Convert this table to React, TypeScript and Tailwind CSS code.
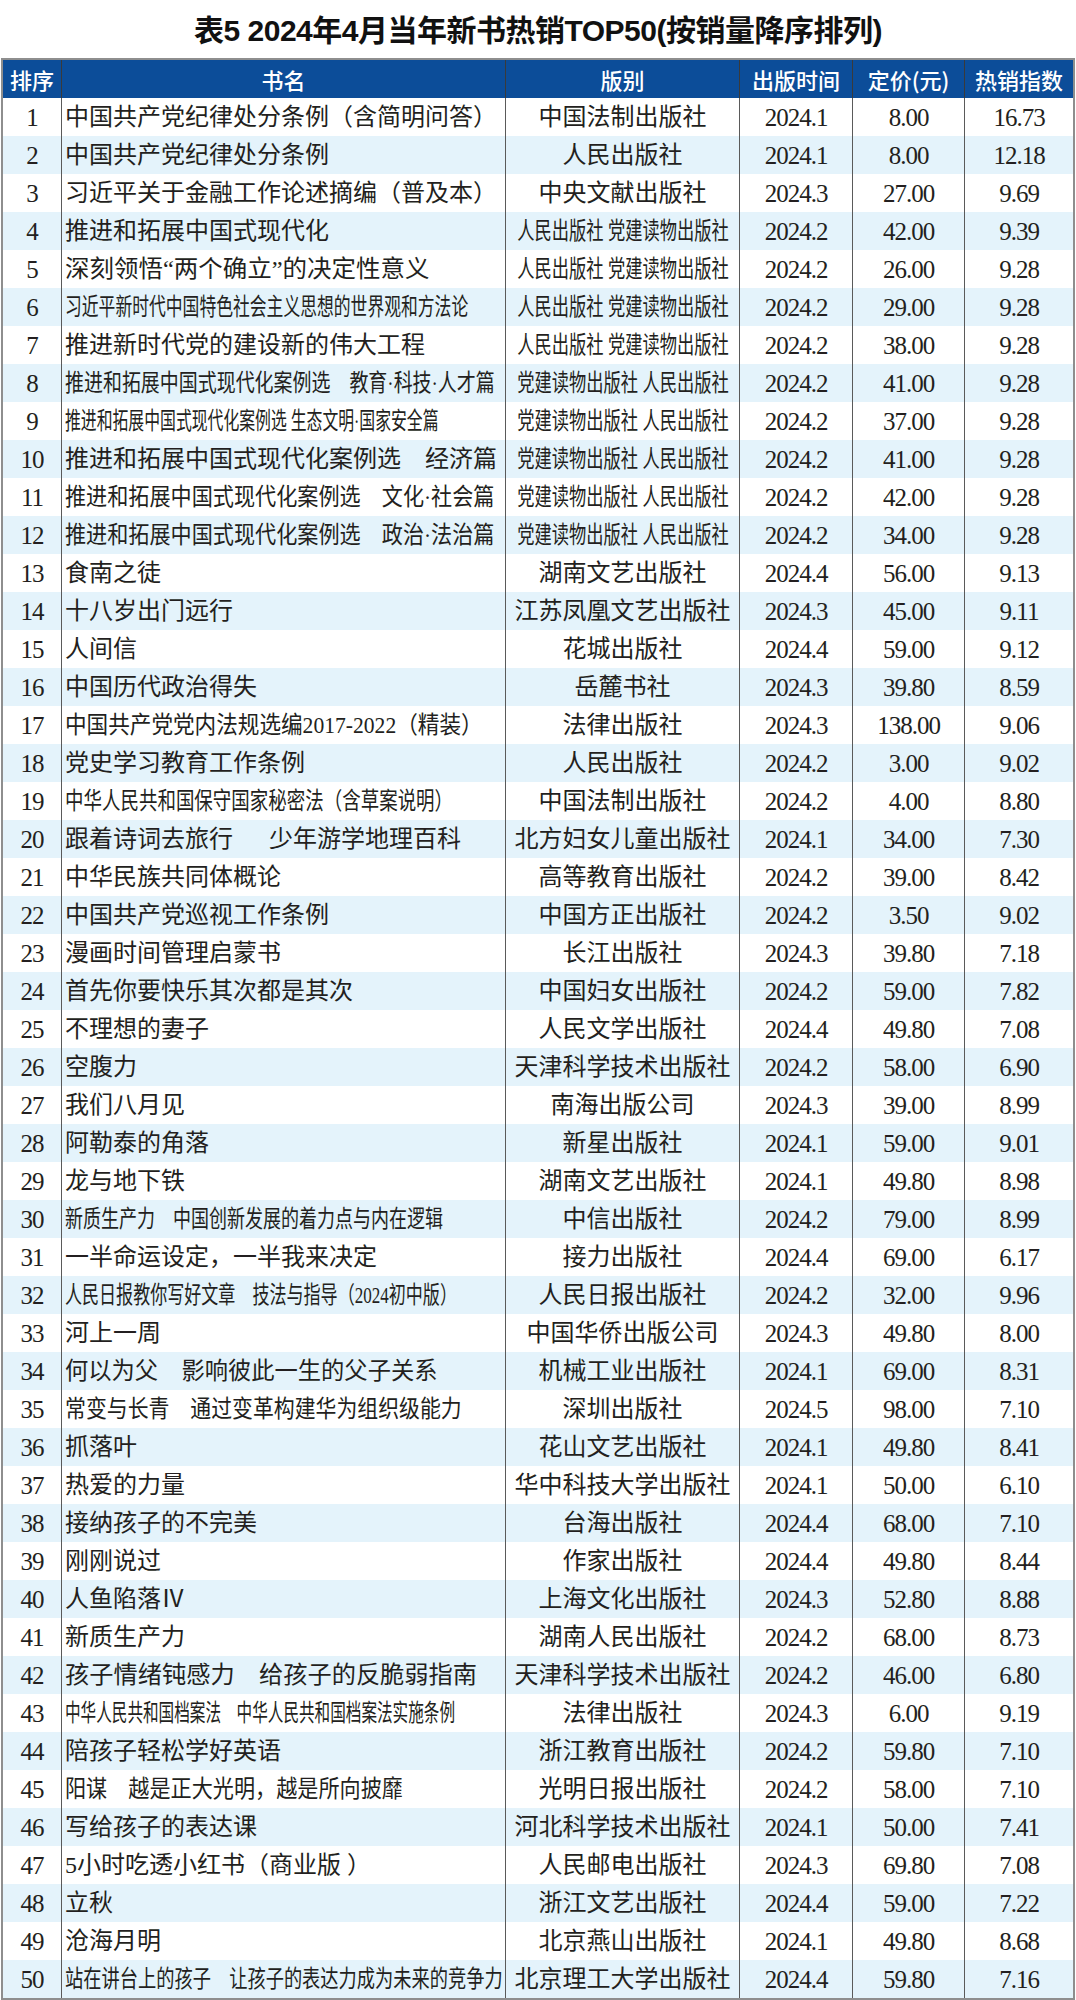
import React from "react";

type Row = {
  n: number;
  t: string;
  ts?: string;
  p: string;
  ps?: string;
  d: string;
  pr: string;
  h: string;
};

const rows: Row[] = [
  { n: 1, t: "中国共产党纪律处分条例（含简明问答）", p: "中国法制出版社", d: "2024.1", pr: "8.00", h: "16.73" },
  { n: 2, t: "中国共产党纪律处分条例", p: "人民出版社", d: "2024.1", pr: "8.00", h: "12.18" },
  { n: 3, t: "习近平关于金融工作论述摘编（普及本）", p: "中央文献出版社", d: "2024.3", pr: "27.00", h: "9.69" },
  { n: 4, t: "推进和拓展中国式现代化", p: "人民出版社 党建读物出版社", ps: "scale-x-[0.72]", d: "2024.2", pr: "42.00", h: "9.39" },
  { n: 5, t: "深刻领悟“两个确立”的决定性意义", ts: "scale-x-[1.02]", p: "人民出版社 党建读物出版社", ps: "scale-x-[0.72]", d: "2024.2", pr: "26.00", h: "9.28" },
  { n: 6, t: "习近平新时代中国特色社会主义思想的世界观和方法论", ts: "scale-x-[0.7]", p: "人民出版社 党建读物出版社", ps: "scale-x-[0.72]", d: "2024.2", pr: "29.00", h: "9.28" },
  { n: 7, t: "推进新时代党的建设新的伟大工程", p: "人民出版社 党建读物出版社", ps: "scale-x-[0.72]", d: "2024.2", pr: "38.00", h: "9.28" },
  { n: 8, t: "推进和拓展中国式现代化案例选　教育·科技·人才篇", ts: "scale-x-[0.79]", p: "党建读物出版社 人民出版社", ps: "scale-x-[0.72]", d: "2024.2", pr: "41.00", h: "9.28" },
  { n: 9, t: "推进和拓展中国式现代化案例选 生态文明·国家安全篇", ts: "scale-x-[0.66]", p: "党建读物出版社 人民出版社", ps: "scale-x-[0.72]", d: "2024.2", pr: "37.00", h: "9.28" },
  { n: 10, t: "推进和拓展中国式现代化案例选　经济篇", p: "党建读物出版社 人民出版社", ps: "scale-x-[0.72]", d: "2024.2", pr: "41.00", h: "9.28" },
  { n: 11, t: "推进和拓展中国式现代化案例选　文化·社会篇", ts: "scale-x-[0.88]", p: "党建读物出版社 人民出版社", ps: "scale-x-[0.72]", d: "2024.2", pr: "42.00", h: "9.28" },
  { n: 12, t: "推进和拓展中国式现代化案例选　政治·法治篇", ts: "scale-x-[0.88]", p: "党建读物出版社 人民出版社", ps: "scale-x-[0.72]", d: "2024.2", pr: "34.00", h: "9.28" },
  { n: 13, t: "食南之徒", p: "湖南文艺出版社", d: "2024.4", pr: "56.00", h: "9.13" },
  { n: 14, t: "十八岁出门远行", p: "江苏凤凰文艺出版社", d: "2024.3", pr: "45.00", h: "9.11" },
  { n: 15, t: "人间信", p: "花城出版社", d: "2024.4", pr: "59.00", h: "9.12" },
  { n: 16, t: "中国历代政治得失", p: "岳麓书社", d: "2024.3", pr: "39.80", h: "8.59" },
  { n: 17, t: "中国共产党党内法规选编2017-2022（精装）", ts: "scale-x-[0.9]", p: "法律出版社", d: "2024.3", pr: "138.00", h: "9.06" },
  { n: 18, t: "党史学习教育工作条例", p: "人民出版社", d: "2024.2", pr: "3.00", h: "9.02" },
  { n: 19, t: "中华人民共和国保守国家秘密法（含草案说明）", ts: "scale-x-[0.77]", p: "中国法制出版社", d: "2024.2", pr: "4.00", h: "8.80" },
  { n: 20, t: "跟着诗词去旅行　  少年游学地理百科", p: "北方妇女儿童出版社", d: "2024.1", pr: "34.00", h: "7.30" },
  { n: 21, t: "中华民族共同体概论", p: "高等教育出版社", d: "2024.2", pr: "39.00", h: "8.42" },
  { n: 22, t: "中国共产党巡视工作条例", p: "中国方正出版社", d: "2024.2", pr: "3.50", h: "9.02" },
  { n: 23, t: "漫画时间管理启蒙书", p: "长江出版社", d: "2024.3", pr: "39.80", h: "7.18" },
  { n: 24, t: "首先你要快乐其次都是其次", p: "中国妇女出版社", d: "2024.2", pr: "59.00", h: "7.82" },
  { n: 25, t: "不理想的妻子", p: "人民文学出版社", d: "2024.4", pr: "49.80", h: "7.08" },
  { n: 26, t: "空腹力", p: "天津科学技术出版社", d: "2024.2", pr: "58.00", h: "6.90" },
  { n: 27, t: "我们八月见", p: "南海出版公司", d: "2024.3", pr: "39.00", h: "8.99" },
  { n: 28, t: "阿勒泰的角落", p: "新星出版社", d: "2024.1", pr: "59.00", h: "9.01" },
  { n: 29, t: "龙与地下铁", p: "湖南文艺出版社", d: "2024.1", pr: "49.80", h: "8.98" },
  { n: 30, t: "新质生产力　中国创新发展的着力点与内在逻辑", ts: "scale-x-[0.75]", p: "中信出版社", d: "2024.2", pr: "79.00", h: "8.99" },
  { n: 31, t: "一半命运设定，一半我来决定", p: "接力出版社", d: "2024.4", pr: "69.00", h: "6.17" },
  { n: 32, t: "人民日报教你写好文章　技法与指导（2024初中版）", ts: "scale-x-[0.71]", p: "人民日报出版社", d: "2024.2", pr: "32.00", h: "9.96" },
  { n: 33, t: "河上一周", p: "中国华侨出版公司", d: "2024.3", pr: "49.80", h: "8.00" },
  { n: 34, t: "何以为父　影响彼此一生的父子关系", ts: "scale-x-[0.97]", p: "机械工业出版社", d: "2024.1", pr: "69.00", h: "8.31" },
  { n: 35, t: "常变与长青　通过变革构建华为组织级能力", ts: "scale-x-[0.87]", p: "深圳出版社", d: "2024.5", pr: "98.00", h: "7.10" },
  { n: 36, t: "抓落叶", p: "花山文艺出版社", d: "2024.1", pr: "49.80", h: "8.41" },
  { n: 37, t: "热爱的力量", p: "华中科技大学出版社", d: "2024.1", pr: "50.00", h: "6.10" },
  { n: 38, t: "接纳孩子的不完美", p: "台海出版社", d: "2024.4", pr: "68.00", h: "7.10" },
  { n: 39, t: "刚刚说过", p: "作家出版社", d: "2024.4", pr: "49.80", h: "8.44" },
  { n: 40, t: "人鱼陷落Ⅳ", p: "上海文化出版社", d: "2024.3", pr: "52.80", h: "8.88" },
  { n: 41, t: "新质生产力", p: "湖南人民出版社", d: "2024.2", pr: "68.00", h: "8.73" },
  { n: 42, t: "孩子情绪钝感力　给孩子的反脆弱指南", ts: "scale-x-[1.01]", p: "天津科学技术出版社", d: "2024.2", pr: "46.00", h: "6.80" },
  { n: 43, t: "中华人民共和国档案法　中华人民共和国档案法实施条例", ts: "scale-x-[0.65]", p: "法律出版社", d: "2024.3", pr: "6.00", h: "9.19" },
  { n: 44, t: "陪孩子轻松学好英语", p: "浙江教育出版社", d: "2024.2", pr: "59.80", h: "7.10" },
  { n: 45, t: "阳谋　越是正大光明，越是所向披靡", ts: "scale-x-[0.88]", p: "光明日报出版社", d: "2024.2", pr: "58.00", h: "7.10" },
  { n: 46, t: "写给孩子的表达课", p: "河北科学技术出版社", d: "2024.1", pr: "50.00", h: "7.41" },
  { n: 47, t: "5小时吃透小红书（商业版 ）", p: "人民邮电出版社", d: "2024.3", pr: "69.80", h: "7.08" },
  { n: 48, t: "立秋", p: "浙江文艺出版社", d: "2024.4", pr: "59.00", h: "7.22" },
  { n: 49, t: "沧海月明", p: "北京燕山出版社", d: "2024.1", pr: "49.80", h: "8.68" },
  { n: 50, t: "站在讲台上的孩子　让孩子的表达力成为未来的竞争力", ts: "scale-x-[0.76]", p: "北京理工大学出版社", d: "2024.4", pr: "59.80", h: "7.16" },
];

const headers = ["排序", "书名", "版别", "出版时间", "定价(元)", "热销指数"];

const bodyFont = "font-['Liberation_Serif','Noto_Sans_CJK_SC',serif]";
const numCls = "text-[25px] tracking-[-1px] leading-none";

export default function App() {
  return (
    <div className="w-[1076px] bg-white text-[#231f20]">
      <div className="h-[58px] flex items-center justify-center pt-[3px]">
        <h1 className="font-['Liberation_Sans','Noto_Sans_CJK_SC',sans-serif] font-bold text-[30px] leading-none tracking-[-0.5px] text-[#111] whitespace-pre">
          表5 2024年4月当年新书热销TOP50(按销量降序排列)
        </h1>
      </div>
      <div className="ml-[1px] w-[1074px] border-2 border-[#8e8e8e]">
        <div className="grid grid-cols-[58px_444px_234px_113px_112px_109px]">
          {headers.map((h, i) => (
            <div
              key={h}
              className={`h-[38px] bg-[#0c4d99] flex items-center justify-center text-white font-['Noto_Sans_CJK_SC',sans-serif] font-medium text-[22px] leading-none whitespace-nowrap ${
                i > 0 ? "border-l border-[#3a3a3a]" : ""
              }`}
            >
              {h}
            </div>
          ))}
          {rows.map((r) => {
            const bg = r.n % 2 === 0 ? "bg-[#e4f3fb]" : "bg-white";
            return (
              <React.Fragment key={r.n}>
                <div className={`h-[38px] ${bg} ${bodyFont} flex items-center justify-center`}>
                  <span className={numCls}>{r.n}</span>
                </div>
                <div className={`h-[38px] ${bg} ${bodyFont} border-l border-[#5a5a5a] flex items-center pl-[3px]`}>
                  <span className={`inline-block origin-left whitespace-pre text-[24px] leading-none ${r.ts ?? ""}`}>
                    {r.t}
                  </span>
                </div>
                <div className={`h-[38px] ${bg} ${bodyFont} border-l border-[#5a5a5a] flex items-center justify-center`}>
                  <span className={`inline-block origin-center whitespace-pre text-[24px] leading-none shrink-0 ${r.ps ?? ""}`}>
                    {r.p}
                  </span>
                </div>
                <div className={`h-[38px] ${bg} ${bodyFont} border-l border-[#5a5a5a] flex items-center justify-center`}>
                  <span className={numCls}>{r.d}</span>
                </div>
                <div className={`h-[38px] ${bg} ${bodyFont} border-l border-[#5a5a5a] flex items-center justify-center`}>
                  <span className={numCls}>{r.pr}</span>
                </div>
                <div className={`h-[38px] ${bg} ${bodyFont} border-l border-[#5a5a5a] flex items-center justify-center`}>
                  <span className={numCls}>{r.h}</span>
                </div>
              </React.Fragment>
            );
          })}
        </div>
      </div>
    </div>
  );
}
